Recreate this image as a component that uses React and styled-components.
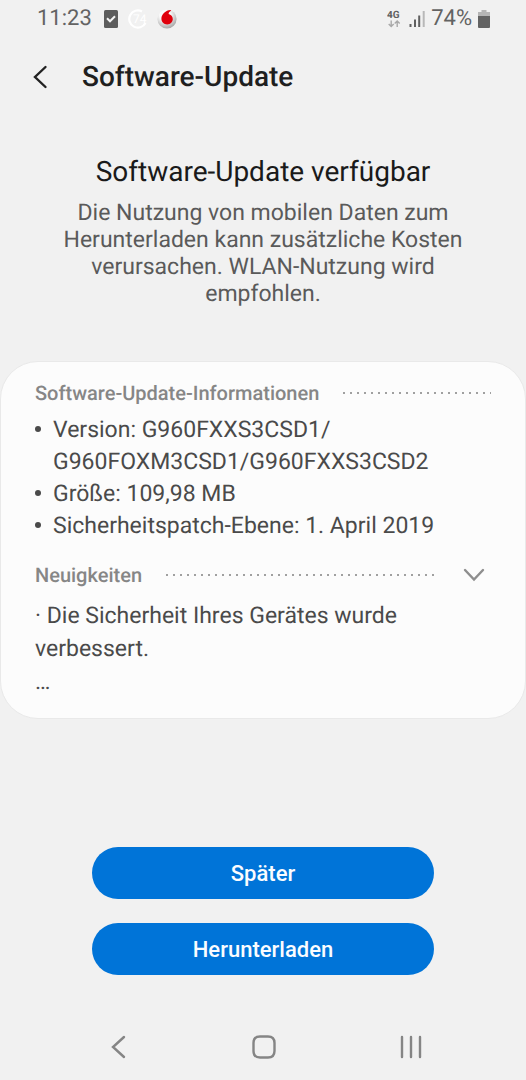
import React, { useState } from "react";
import styled, { createGlobalStyle } from "styled-components";

const GlobalStyle = createGlobalStyle`
  *, *::before, *::after { box-sizing: border-box; }
  body {
    margin: 0;
    background: #f1f1f1;
    color: #4a4a4a;
    font-family: Roboto, "Liberation Sans", sans-serif;
    text-rendering: geometricPrecision;
  }
  h1, h2, h3, p, ul { margin: 0; padding: 0; }
  button { border: 0; padding: 0; background: none; font-family: inherit; cursor: pointer; }
  svg { display: block; flex: none; }
`;

const Screen = styled.div`
  display: flex;
  flex-direction: column;
  min-height: 100vh;
`;

const StatusBar = styled.div`
  display: flex;
  justify-content: space-between;
  height: 37px;
  padding: 0 36px 0 37px;
  color: #636363;
  font-size: 22px;
  line-height: 37px;
`;

const StatusGroup = styled.div`
  display: flex;
  align-items: center;
  gap: ${(p) => p.$gap}px;
`;

const Header = styled.header`
  display: flex;
  align-items: center;
  gap: 30px;
  height: 80px;
  padding: 0 28px;
`;

const IconButton = styled.button`
  display: flex;
  align-items: center;
  justify-content: center;
  width: 24px;
  height: 32px;
  color: ${(p) => p.$color};
`;

const PageTitle = styled.h1`
  color: #1f1f1f;
  font-size: 28px;
  font-weight: 500;
  line-height: 36px;
`;

const Intro = styled.section`
  padding: 37px 52px 0;
  text-align: center;
`;

const IntroTitle = styled.h2`
  color: #1a1a1a;
  font-size: 28px;
  font-weight: 400;
  line-height: 36px;
`;

const IntroText = styled.p`
  margin-top: 9px;
  color: #5a5a5a;
  font-size: 23px;
  line-height: 27px;
`;

const Card = styled.section`
  margin-top: 54px;
  padding: 17px 34px 20px;
  border: 1px solid #e9e9e9;
  border-radius: 38px;
  background: #fcfcfc;
`;

const SectionHead = styled.div`
  display: flex;
  align-items: center;
  gap: 24px;
  height: 28px;
  margin-top: ${(p) => p.$top || 0}px;
  padding-right: ${(p) => p.$end || 0}px;
`;

const SectionTitle = styled.h3`
  color: #868686;
  font-size: 20px;
  font-weight: 500;
  line-height: 28px;
`;

const Dots = styled.span`
  flex: 1;
  height: 2px;
  background: repeating-linear-gradient(90deg, #a0a0a0 0 2px, transparent 2px 7px);
`;

const InfoList = styled.ul`
  margin-top: 7px;
  list-style: none;
  font-size: 23px;
  line-height: 32px;
`;

const InfoItem = styled.li`
  display: flex;
  gap: 12px;

  &::before {
    content: "";
    flex: none;
    width: 6px;
    height: 6px;
    margin-top: 12px;
    border-radius: 50%;
    background: #4a4a4a;
  }
`;

const News = styled.p`
  margin-top: 10px;
  font-size: 23px;
  line-height: 33px;
`;

const Actions = styled.div`
  display: flex;
  flex-direction: column;
  gap: 24px;
  width: 65%;
  margin: auto auto 0;
`;

const ActionButton = styled.button`
  height: 52px;
  border-radius: 26px;
  background: #0074d8;
  color: #fafcff;
  font-size: 22px;
  font-weight: 500;
`;

const NavBar = styled.nav`
  display: flex;
  justify-content: space-around;
  align-items: center;
  height: 66px;
  margin-top: 39px;
  padding: 0 42px 0 45px;
`;

const CheckIcon = () => (
  <svg width="18" height="18" viewBox="-3 0 18 18">
    <rect width="14" height="18" rx="1.5" fill="#5d5d5d" />
    <path d="M3 8.3l3 3 5-5" fill="none" stroke="#f5f5f5" strokeWidth="2" />
  </svg>
);

const RingIcon = () => (
  <svg width="20" height="20" viewBox="0 0 20 20">
    <path d="M14 2.500A8.600 8.600 0 1 0 17.500 14" fill="none" stroke="#fff" strokeWidth="2.2" />
    <text x="5" y="14" fontSize="12" fontWeight="400" fill="#fff">74</text>
  </svg>
);

const VodafoneIcon = () => (
  <svg width="20" height="20" viewBox="0 0 20 20">
    <defs>
      <radialGradient id="silver" cx="40%" cy="30%" r="70%">
        <stop offset="0.4" stopColor="#fafafa" />
        <stop offset="1" stopColor="#a9a9a9" />
      </radialGradient>
    </defs>
    <circle cx="10" cy="10" r="9.6" fill="url(#silver)" />
    <path
      d="M13.2 1C9 1.3 4.400 5 4.400 9.800c0 3.200 2.500 5.700 5.800 5.700s5.600-2.400 5.600-5.400c0-2.700-1.800-4.400-4.200-5 0-1.700 1.200-2.900 2.700-3.300z"
      fill="#e0000c"
    />
  </svg>
);

const NetworkIcon = () => (
  <svg width="16" height="18" viewBox="0 0 16 18">
    <text x="0" y="8" fontSize="10" fontWeight="700" fill="#606060">4G</text>
    <path d="M4.2 10.5v6M1.7 14l2.500 2.500L6.700 14M10.200 17v-6M7.700 13.500l2.500-2.500 2.500 2.500" fill="none" stroke="#a9a9a9" strokeWidth="1.4" />
  </svg>
);

const SignalIcon = () => (
  <svg width="16" height="18" viewBox="0 0 16 18">
    <path d="M1.5 14v3M6 9.5V17M10.2 5.5V17" stroke="#606060" strokeWidth="2" />
    <path d="M14.7 1v16" stroke="#b8b8b8" strokeWidth="2" />
  </svg>
);

const BatteryIcon = () => (
  <svg width="12" height="18" viewBox="0 0 12 18">
    <path d="M3.5 0h5v2H12v5H0V2h3.5z" fill="#b5b5b5" />
    <path d="M0 6h12v11a1 1 0 0 1-1 1H1a1 1 0 0 1-1-1z" fill="#636363" />
  </svg>
);

const LineIcon = ({ w, h, d, stroke = 2.4 }) => (
  <svg width={w} height={h} viewBox={`0 0 ${w} ${h}`} fill="none" stroke="currentColor" strokeWidth={stroke} strokeLinecap="round" strokeLinejoin="miter">
    <path d={d} />
  </svg>
);

const details = [
  <>Version: G960FXXS3CSD1/<wbr />G960FOXM3CSD1/G960FXXS3CSD2</>,
  "Größe: 109,98 MB",
  "Sicherheitspatch-Ebene: 1. April 2019",
];

export default function App() {
  const [open, setOpen] = useState(true);

  return (
    <Screen>
      <GlobalStyle />
      <StatusBar>
        <StatusGroup $gap={9}>
          <span>11:23</span>
          <CheckIcon />
          <RingIcon />
          <VodafoneIcon />
        </StatusGroup>
        <StatusGroup $gap={6}>
          <NetworkIcon />
          <SignalIcon />
          <span>74%</span>
          <BatteryIcon />
        </StatusGroup>
      </StatusBar>

      <Header>
        <IconButton type="button" aria-label="Zurück" $color="#222">
          <LineIcon w={16} h={24} d="M13.5 2L3 12l10.5 10" />
        </IconButton>
        <PageTitle>Software-Update</PageTitle>
      </Header>

      <main>
        <Intro>
          <IntroTitle>Software-Update verfügbar</IntroTitle>
          <IntroText>
            Die Nutzung von mobilen Daten zum Herunterladen kann zusätzliche Kosten verursachen. WLAN-Nutzung wird empfohlen.
          </IntroText>
        </Intro>

        <Card>
          <SectionHead>
            <SectionTitle>Software-Update-Informationen</SectionTitle>
            <Dots />
          </SectionHead>
          <InfoList>
            {details.map((detail, i) => (
              <InfoItem key={i}><span>{detail}</span></InfoItem>
            ))}
          </InfoList>
          <SectionHead $top={19} $end={5}>
            <SectionTitle>Neuigkeiten</SectionTitle>
            <Dots />
            <IconButton type="button" aria-label="Neuigkeiten ein- oder ausblenden" aria-expanded={open} $color="#8e8e8e" onClick={() => setOpen(!open)}>
              <LineIcon w={22} h={14} d="M2 2l9 9.5L20 2" />
            </IconButton>
          </SectionHead>
          {open && (
            <News>
              · Die Sicherheit Ihres Gerätes wurde verbessert.
              <br />
              …
            </News>
          )}
        </Card>
      </main>

      <Actions>
        <ActionButton type="button">Später</ActionButton>
        <ActionButton type="button">Herunterladen</ActionButton>
      </Actions>

      <NavBar>
        <IconButton type="button" aria-label="Zurück" $color="#858585">
          <LineIcon w={16} h={24} d="M14 2L3 12l11 10" />
        </IconButton>
        <IconButton type="button" aria-label="Startbildschirm" $color="#858585">
          <LineIcon w={24} h={24} d="M8 1.5h8Q22.5 1.5 22.5 8v8Q22.5 22.5 16 22.5H8Q1.5 22.5 1.5 16V8Q1.5 1.5 8 1.5z" />
        </IconButton>
        <IconButton type="button" aria-label="Letzte Apps" $color="#858585">
          <LineIcon w={22} h={24} d="M2 2v20M11 2v20M20 2v20" />
        </IconButton>
      </NavBar>
    </Screen>
  );
}
